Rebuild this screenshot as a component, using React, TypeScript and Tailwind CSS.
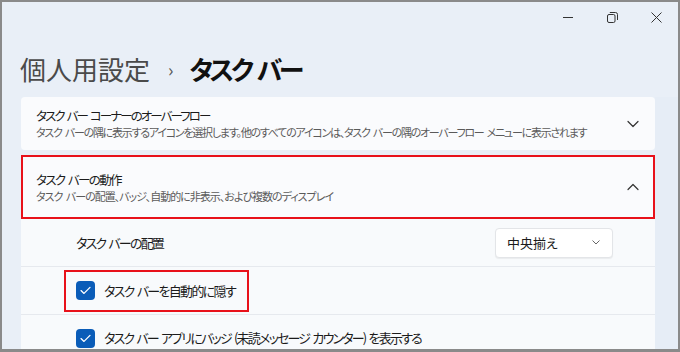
import React from 'react';

const jp = { fontFamily: '"Noto Sans CJK JP", "Noto Sans", sans-serif' };

function Check() {
  return (
    <span className="flex h-[19px] w-[19px] shrink-0 items-center justify-center rounded-[4px] bg-[#0a5cb8]">
      <svg width="11" height="9" viewBox="0 0 11 9" fill="none">
        <path d="M1 4.6 L4 7.4 L10 1.4" stroke="#fff" strokeWidth="1.3" strokeLinecap="round" strokeLinejoin="round" />
      </svg>
    </span>
  );
}

function Chevron({ up }: { up?: boolean }) {
  return (
    <svg width="12" height="8" viewBox="0 0 12 8" fill="none" className="shrink-0">
      <path d={up ? 'M1 6.5 L6 1.5 L11 6.5' : 'M1 1.5 L6 6.5 L11 1.5'} stroke="#333" strokeWidth="1.2" strokeLinecap="round" strokeLinejoin="round" />
    </svg>
  );
}

export default function App() {
  return (
    <div
      style={jp}
      className="flex h-[352px] w-[680px] flex-col overflow-hidden border-2 border-b-[3px] border-[#8a8a8a] bg-[#e9eff7] text-[#1b1b1b] [font-feature-settings:'palt']"
    >
      {/* title bar */}
      <div className="flex h-[30px] shrink-0 items-center justify-end">
        <div className="flex h-full w-[44px] items-center justify-center">
          <span className="block h-[1px] w-[10px] bg-[#333]" />
        </div>
        <div className="flex h-full w-[44px] items-center justify-center">
          <svg width="11" height="11" viewBox="0 0 11 11" fill="none">
            <rect x="0.5" y="2.5" width="7.5" height="8" rx="1.5" stroke="#333" />
            <path d="M2.8 0.5 H8.5 a2 2 0 0 1 2 2 V8" stroke="#333" />
          </svg>
        </div>
        <div className="flex h-full w-[44px] items-center justify-center">
          <svg width="11" height="11" viewBox="0 0 11 11" fill="none">
            <path d="M0.5 0.5 L10.5 10.5 M10.5 0.5 L0.5 10.5" stroke="#333" strokeWidth="1" />
          </svg>
        </div>
      </div>

      {/* heading */}
      <div className="mt-[19px] flex h-[36px] items-center whitespace-nowrap pl-[18px] text-[26px] leading-[36px]">
        <span className="text-[#4a4a4a]">個人用設定</span>
        <span className="ml-[18px] mr-[16px] text-[18px] text-[#555]">›</span>
        <span className="font-bold tracking-[-3.5px] text-[#111] [word-spacing:4px]">タスク バー</span>
      </div>

      <div className="mt-[10px] flex flex-1">
        <div className="ml-[19px] flex w-[634px] flex-col">
          {/* card 1 */}
          <div className="flex h-[53px] items-center justify-between rounded-[4px] bg-[#fafbfd] pl-[15px] pr-[16px]">
            <div className="flex flex-col whitespace-nowrap [word-spacing:2px]">
              <span className="text-[12.5px] leading-[17px] tracking-[-1.9px]">タスク バー コーナーのオーバーフロー</span>
              <span className="text-[11px] leading-[16px] tracking-[-1.25px] text-[#5a5a5a]">
                タスク バーの隅に表示するアイコンを選択します。他のすべてのアイコンは、タスク バーの隅のオーバーフロー メニューに表示されます
              </span>
            </div>
            <Chevron />
          </div>

          {/* card 2 */}
          <div className="mt-[5px] flex h-[64px] items-center justify-between border-2 border-[#e8111a] bg-[#fafbfd] pl-[13px] pr-[14px]">
            <div className="flex flex-col whitespace-nowrap [word-spacing:2px]">
              <span className="text-[12.5px] leading-[17px] tracking-[-1.6px]">タスク バーの動作</span>
              <span className="text-[11px] leading-[16px] tracking-[-1px] text-[#5a5a5a]">
                タスク バーの配置、バッジ、自動的に非表示、および複数のディスプレイ
              </span>
            </div>
            <Chevron up />
          </div>

          {/* expanded rows */}
          <div className="flex flex-1 flex-col bg-[#f8fafc] [word-spacing:2px]">
            <div className="flex h-[48px] items-center justify-between border-b border-[#e6e9ee] pl-[55px] pr-[42px]">
              <span className="text-[13px] tracking-[-1.8px]">タスク バーの配置</span>
              <div className="flex h-[30px] w-[118px] items-center justify-between rounded-[4px] border border-[#e3e5e8] bg-white pl-[11px] pr-[12px] shadow-[0_1px_1px_rgba(0,0,0,0.06)]">
                <span className="text-[13px]">中央揃え</span>
                <svg width="8" height="5" viewBox="0 0 8 5" fill="none">
                  <path d="M0.5 0.5 L4 4 L7.5 0.5" stroke="#666" strokeWidth="1" />
                </svg>
              </div>
            </div>
            <div className="flex h-[48px] items-center border-b border-[#e6e9ee] pl-[43px]">
              <div className="flex h-[42px] w-[185px] items-center gap-[9px] whitespace-nowrap border-2 border-[#e8111a] pl-[10px]">
                <Check />
                <span className="text-[13px] tracking-[-1.7px]">タスク バーを自動的に隠す</span>
              </div>
            </div>
            <div className="flex h-[40px] items-center gap-[9px] whitespace-nowrap pl-[55px] pt-[6px]">
              <Check />
              <span className="text-[13px] tracking-[-1.8px]">タスク バー アプリにバッジ (未読メッセージ カウンター) を表示する</span>
            </div>
          </div>
        </div>
        <div className="flex-1 bg-[#e6edf6]" />
      </div>
    </div>
  );
}
